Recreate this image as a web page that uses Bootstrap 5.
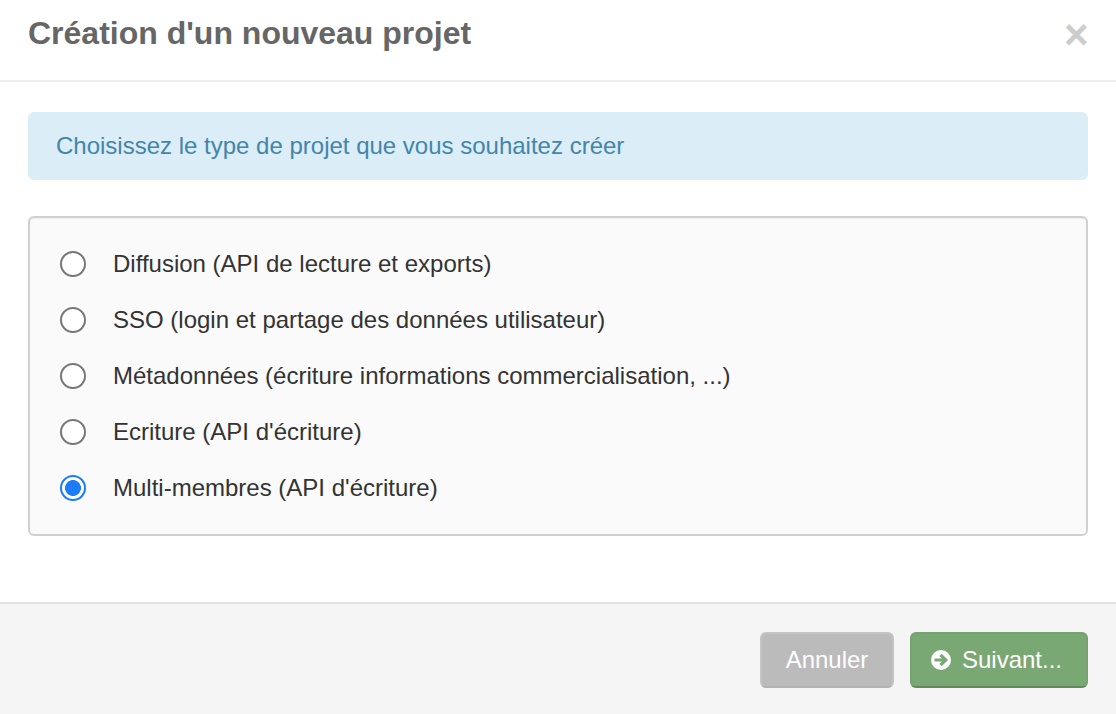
<!DOCTYPE html>
<html lang="fr">
<head>
<meta charset="utf-8">
<title>Création d'un nouveau projet</title>
<link rel="stylesheet" href="https://cdn.jsdelivr.net/npm/bootstrap@5.3.0/dist/css/bootstrap.min.css">
<style>
html, body { height: 714px; overflow: hidden; background: #fff; }
body { font-family: "Liberation Sans", Arial, sans-serif; font-size: 24px; color: #333; }
.dlg { height: 714px; display: flex; flex-direction: column; }
.dlg-head { height: 82px; padding: 0 28px; border-bottom: 2px solid #eee; }
.dlg-title { font-size: 32px; font-weight: 700; color: #666; line-height: 66px; margin: 0; }
.dlg-close { font-size: 42px; font-weight: 700; color: #ccc; line-height: 1; background: none; border: 0; padding: 0; width: 24px; height: 24px; margin-top: 14px; }
.dlg-body { flex: 1 1 auto; padding: 30px 28px 0; }
.dlg-info { background: #dbedf7; color: #4485ab; height: 68px; padding: 0 28px; border-radius: 6px; border: 0; margin: 0 0 36px; display: flex; align-items: center; font-size: 24px; }
.dlg-well { background: #fafafa; border: 2px solid #d0d0d0; border-radius: 6px; height: 320px; padding: 18px 30px; box-shadow: inset 0 1px 1px rgba(0,0,0,.05); }
.dlg-opt { height: 56px; display: flex; align-items: center; gap: 27px; margin: 0; padding: 0; color: #333; line-height: 1; }
.dlg-opt .form-check-input { width: 26px; height: 26px; margin: 0; float: none; flex: none; border: 2px solid #767676; background-color: #fff; }
.dlg-opt .form-check-input:checked { border-color: #1a7cf7; background-color: #fff; background-image: radial-gradient(circle, #1a7cf7 0 7.6px, #fff 8.2px); }
.dlg-foot { height: 112px; background: #f5f5f5; border-top: 2px solid #e2e2e2; padding: 28px 28px 0; }
.btn-annuler, .btn-suivant { height: 56px; font-size: 24px; color: #fff; border-radius: 6px; padding: 0; display: inline-flex; align-items: center; justify-content: center; }
.btn-annuler { width: 134px; background: #bbb; border: 2px solid #c4c4c4; border-bottom-color: #b2b2b2; }
.btn-suivant { width: 178px; background: #7aa874; border: 2px solid #75a26f; border-bottom-color: #5f8a5a; gap: 10px; padding-right: 6px; }
.ico-next { width: 22px; height: 22px; flex: none; }
</style>
</head>
<body>
<div class="dlg">
  <div class="dlg-head d-flex justify-content-between align-items-start">
    <h3 class="dlg-title">Création d'un nouveau projet</h3>
    <button type="button" class="dlg-close" aria-label="Fermer">×</button>
  </div>
  <div class="dlg-body">
    <div class="alert dlg-info">Choisissez le type de projet que vous souhaitez créer</div>
    <div class="dlg-well">
      <label class="dlg-opt form-check"><input class="form-check-input" type="radio" name="t"><span>Diffusion (API de lecture et exports)</span></label>
      <label class="dlg-opt form-check"><input class="form-check-input" type="radio" name="t"><span>SSO (login et partage des données utilisateur)</span></label>
      <label class="dlg-opt form-check"><input class="form-check-input" type="radio" name="t"><span>Métadonnées (écriture informations commercialisation, ...)</span></label>
      <label class="dlg-opt form-check"><input class="form-check-input" type="radio" name="t"><span>Ecriture (API d'écriture)</span></label>
      <label class="dlg-opt form-check"><input class="form-check-input" type="radio" name="t" checked><span>Multi-membres (API d'écriture)</span></label>
    </div>
  </div>
  <div class="dlg-foot d-flex justify-content-end gap-3">
    <button type="button" class="btn btn-annuler">Annuler</button>
    <button type="button" class="btn btn-suivant">
      <svg class="ico-next" viewBox="0 0 22 22"><circle cx="11" cy="11" r="10" fill="#fff"/><path d="M4.5 11H15M10.5 5.8 15.8 11l-5.3 5.2" fill="none" stroke="#7aa874" stroke-width="3.2"/></svg>
      Suivant...
    </button>
  </div>
</div>
<script src="https://cdn.jsdelivr.net/npm/bootstrap@5.3.0/dist/js/bootstrap.bundle.min.js"></script>
</body>
</html>
